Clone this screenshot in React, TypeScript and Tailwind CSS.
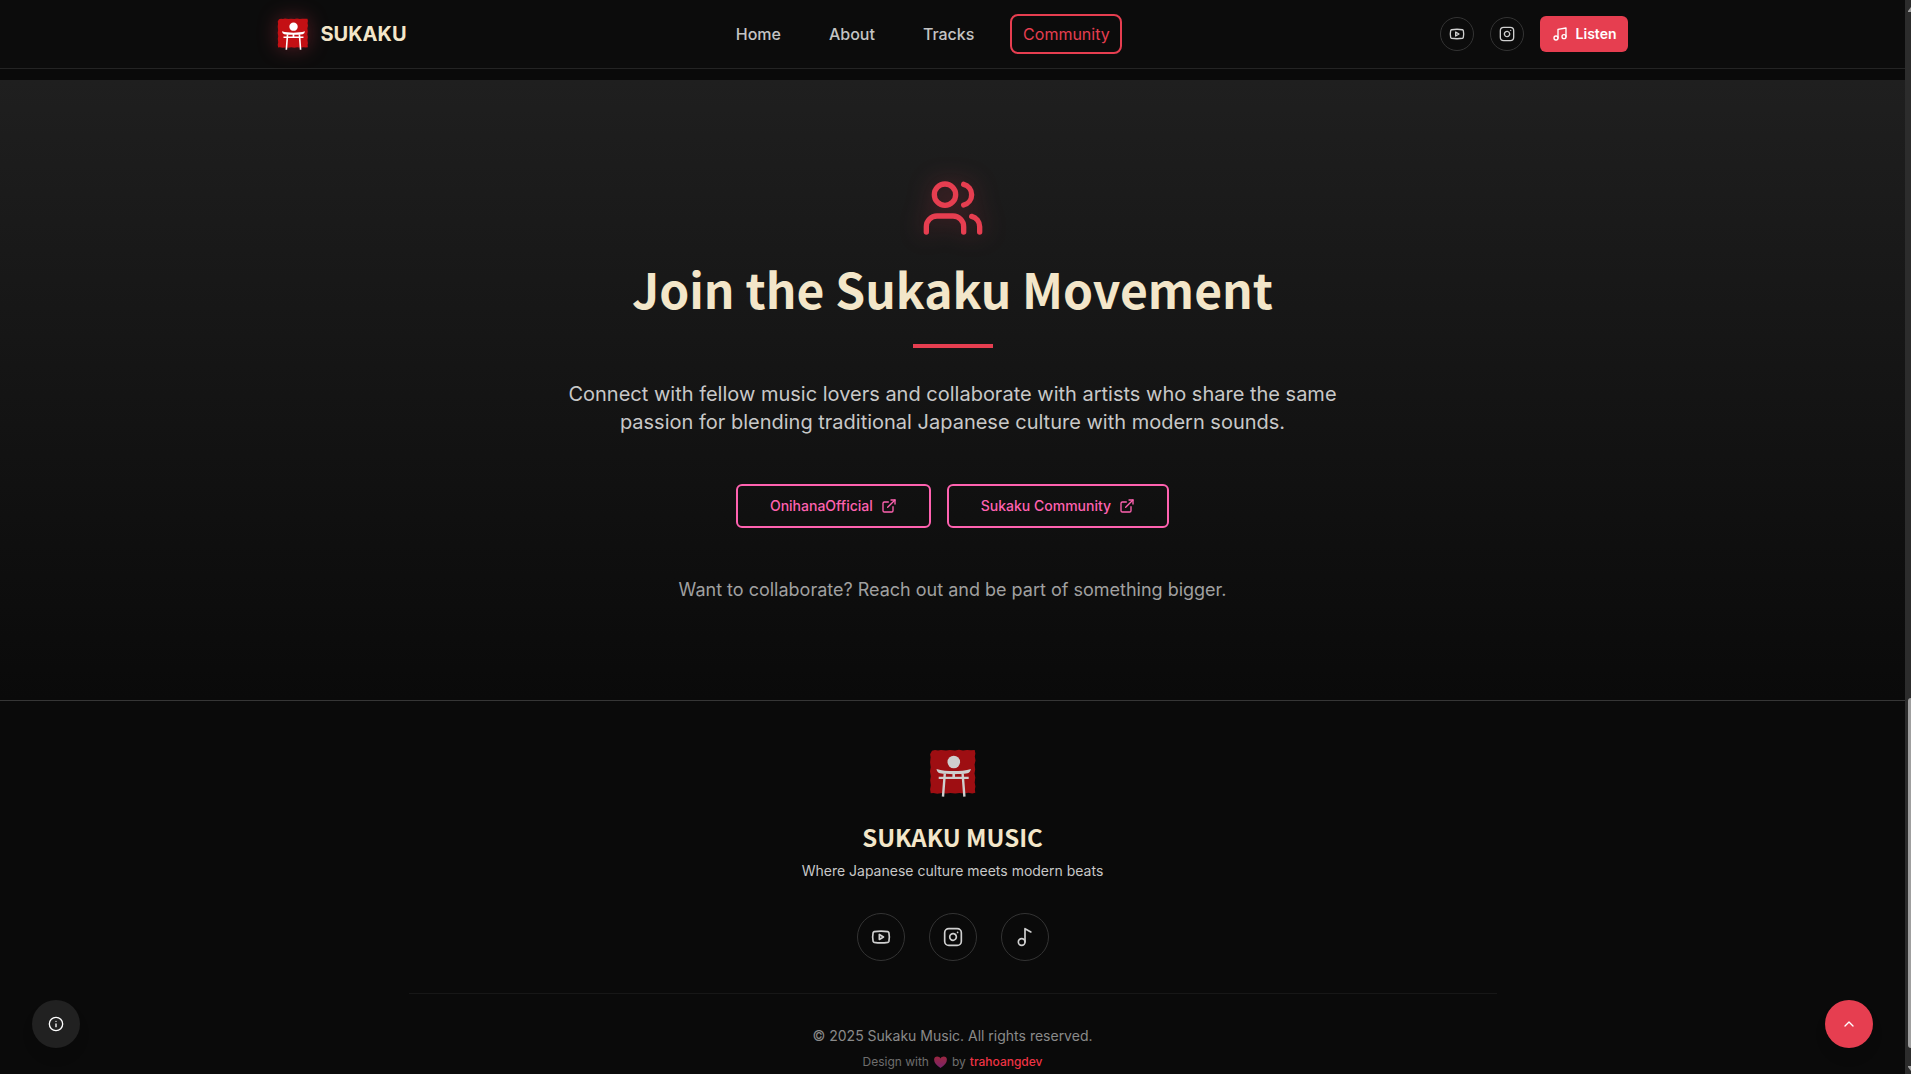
import { ReactNode } from "react";
import { ChevronUp, ExternalLink, Info, Instagram, Music, Music2, Users, Youtube } from "lucide-react";

function ToriiLogo({ className }: { className: string }) {
  return (
    <svg viewBox="0 0 48 48" className={className} role="img" aria-label="Sukaku torii gate">
      <path
        fill="#c41014"
        d="M3 1.800l3-.8 3 .5 3-.6 5 .7 4-.6 5 .5 4-.7 4 .8 4-.6 4 .3 3.700-.2.7 3.400-.6 3 .7 4-.9 4 .6 5-.7 4 .8 4-.6 5 .7 4-.5 3 .4 3.200-3 .7-4-.6-4 .8-5-.6-4 .5-5-.6-4 .7-4-.5-5 .6-4-.8-2.600.4-.6-4 .7-4-.6-5 .6-4-.8-5 .7-4-.6-5 .5-5-.5-3z"
      />
      <circle cx="24.800" cy="13" r="6.300" fill="#fff" />
      <path
        fill="#fff"
        d="M7.500 20c5 1.700 11.300 2 17.200 2s12.300-.3 17.200-2c-.3 2.300-1.500 3.900-3.400 4.300-4 .8-8.800.9-13.800.9s-9.800-.1-13.800-.9C9 23.900 7.800 22.300 7.500 20zM9.700 27.800h30v2.200h-30zM23.400 24.500H26v4h-2.600z"
      />
      <path d="M15.800 24.500L14 47.700M33.600 24.500l1.800 23.200" stroke="#fff" strokeWidth="2.400" fill="none" />
    </svg>
  );
}

function RoundLink({ label, size, children }: { label: string; size: string; children: ReactNode }) {
  return (
    <a
      href="#"
      aria-label={label}
      className={`flex items-center justify-center rounded-full border border-[#333333] text-[#d0d0d0] ${size}`}
    >
      {children}
    </a>
  );
}

const navLinks = ["Home", "About", "Tracks"];
const channels = ["OnihanaOfficial", "Sukaku Community"];

function Header() {
  return (
    <header className="border-b border-[#242424] bg-[#0c0c0c]">
      <div className="mx-auto flex h-[68px] max-w-[1400px] items-center justify-between px-6">
        <a href="#" className="flex items-center gap-3">
          <ToriiLogo className="size-8 drop-shadow-[0_0_10px_rgba(230,57,80,0.35)]" />
          <span className="font-[Inter,sans-serif] text-xl font-bold text-[#f3e6c9]">SUKAKU</span>
        </a>
        <nav className="flex items-center gap-6">
          {navLinks.map((name) => (
            <a key={name} href="#" className="px-3 font-medium text-[#c4c4c4]">
              {name}
            </a>
          ))}
          <a
            href="#"
            aria-current="page"
            className="flex h-10 min-w-28 items-center justify-center rounded-lg border-2 border-[#e63e50] px-2.5 text-[#e63e50]"
          >
            Community
          </a>
        </nav>
        <div className="flex items-center gap-4">
          <RoundLink label="YouTube" size="size-[34px]">
            <Youtube className="size-4" />
          </RoundLink>
          <RoundLink label="Instagram" size="size-[34px]">
            <Instagram className="size-4" />
          </RoundLink>
          <button className="flex h-9 items-center gap-2 rounded-md bg-[#e63e50] px-3 text-sm font-semibold text-white">
            <Music className="size-4" />
            Listen
          </button>
        </div>
      </div>
    </header>
  );
}

function JoinSection() {
  return (
    <section className="mt-[11px] flex flex-col items-center bg-linear-to-b from-[#1f1f1f] to-[#0a0a0a] px-6 py-24 text-center">
      <Users className="size-16 text-[#e63e50] drop-shadow-[0_0_12px_rgba(230,57,80,0.35)]" />
      <h1 className="mt-6 font-['Noto_Sans_CJK_JP',sans-serif] text-5xl leading-12 font-bold text-[#f3e6c9]">
        Join the Sukaku Movement
      </h1>
      <div className="mt-8 h-1 w-20 bg-[#e63e50]" />
      <p className="mt-8 max-w-[800px] text-xl leading-7 text-[#c8c8c8]">
        Connect with fellow music lovers and collaborate with artists who share the same passion for
        blending traditional Japanese culture with modern sounds.
      </p>
      <div className="mt-12 flex gap-4">
        {channels.map((name) => (
          <a
            key={name}
            href="#"
            className="flex h-11 items-center gap-2 rounded-md border-2 border-[#ff62b0] px-8 text-sm font-medium text-[#ff62b0]"
          >
            {name}
            <ExternalLink className="size-4" />
          </a>
        ))}
      </div>
      <p className="mt-12 text-lg leading-7 text-[#a0a0a0]">
        Want to collaborate? Reach out and be part of something bigger.
      </p>
    </section>
  );
}

function Footer() {
  return (
    <footer className="flex flex-col items-center border-t border-[#363636] px-6 pt-12 text-center">
      <ToriiLogo className="size-12 opacity-80" />
      <h2 className="mt-6 font-['Noto_Sans_CJK_JP',sans-serif] text-2xl leading-8 font-bold text-[#f3e6c9]">
        SUKAKU MUSIC
      </h2>
      <p className="mt-2 text-sm text-[#c8c8c8]">Where Japanese culture meets modern beats</p>
      <div className="mt-8 flex gap-6">
        <RoundLink label="YouTube" size="size-12">
          <Youtube className="size-5" />
        </RoundLink>
        <RoundLink label="Instagram" size="size-12">
          <Instagram className="size-5" />
        </RoundLink>
        <RoundLink label="Music" size="size-12">
          <Music2 className="size-5" />
        </RoundLink>
      </div>
      <div className="mt-8 w-full max-w-[1088px] border-t border-[#171717] pt-8">
        <p className="text-sm text-[#8a8a8a]">© 2025 Sukaku Music. All rights reserved.</p>
        <p className="mt-2 flex items-center justify-center gap-1 text-xs text-[#6e6e6e]">
          Design with
          <svg viewBox="0 0 14 12" className="h-3 w-[15px]" aria-label="love">
            <defs>
              <linearGradient id="heart" x1="0" y1="0" x2="0" y2="1">
                <stop offset="0" stopColor="#9b2740" />
                <stop offset="1" stopColor="#78236a" />
              </linearGradient>
            </defs>
            <path
              fill="url(#heart)"
              d="M7 12C3 9 .6 6.800.6 3.700.6 1.800 2 .6 3.700.6 5.100.6 6.300 1.300 7 2.500 7.700 1.300 8.900.6 10.300.6 12 .6 13.400 1.800 13.400 3.700 13.400 6.800 11 9 7 12z"
            />
          </svg>
          by
          <a href="#" className="font-medium text-[#ee3344]">
            trahoangdev
          </a>
        </p>
      </div>
    </footer>
  );
}

export default function App() {
  return (
    <div className="flex h-screen overflow-hidden bg-[#0a0a0a] font-[Inter,sans-serif]">
      <div className="min-w-0 flex-1">
        <Header />
        <main>
          <JoinSection />
        </main>
        <Footer />
      </div>
      <div aria-hidden="true" className="flex w-1.5 flex-col items-end bg-[#2c2c2c]">
        <svg viewBox="0 0 3 6" className="mt-[7px] h-1.5 w-[3px]" fill="#9f9f9f">
          <path d="M3 0v5H0V4z" />
        </svg>
        <div className="mt-auto h-[350px] w-[3px] rounded-l-full bg-[#9f9f9f]" />
        <svg viewBox="0 0 3 6" className="mt-[18px] mb-0.5 h-1.5 w-[3px]" fill="#9f9f9f">
          <path d="M0 0h3v5L0 1z" />
        </svg>
      </div>
      <button
        aria-label="Information"
        className="fixed bottom-[26px] left-8 flex size-12 items-center justify-center rounded-full bg-[#212121] text-white shadow-lg"
      >
        <Info className="size-4" />
      </button>
      <button
        aria-label="Back to top"
        className="fixed right-[38px] bottom-[26px] flex size-12 items-center justify-center rounded-full bg-[#e63e50] text-white shadow-lg"
      >
        <ChevronUp className="size-4" />
      </button>
    </div>
  );
}
